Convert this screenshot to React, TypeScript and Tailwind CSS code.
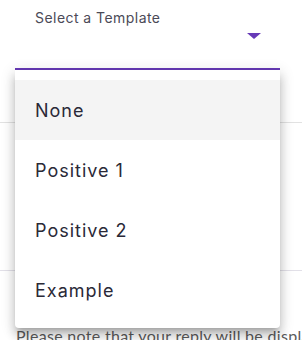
import { useState } from 'react'

const templates = ['None', 'Positive 1', 'Positive 2', 'Example']

export default function App() {
  const [selected, setSelected] = useState('None')

  return (
    <div className="relative w-[302px] h-[340px] overflow-hidden bg-white font-['Inter',sans-serif]">
      {/* select field */}
      <div className="ml-[15px] w-[265px] h-[70px] border-b-2 border-[#673ab7] pl-5 pr-[19px] pt-[8px] flex flex-col">
        <span className="text-[14px] leading-5 tracking-[0.45px] text-[#4b4a57]">Select a Template</span>
        <div className="flex justify-end mt-[5px]">
          <span className="w-0 h-0 border-l-[7px] border-r-[7px] border-t-[6px] border-l-transparent border-r-transparent border-t-[#673ab7]" />
        </div>
      </div>

      {/* page content beneath the open menu */}
      <div className="h-[52px]" />
      <div className="h-px bg-[#e2e2e2]" />
      <div className="h-[147px]" />
      <div className="h-px bg-[#e2e0e8]" />
      <div className="h-[55px]" />
      <p className="px-4 text-[16px] leading-5 tracking-[0.3px] whitespace-nowrap text-[#5b5b5b] font-['Lato',sans-serif]">
        Please note that your reply will be displayed
      </p>

      {/* dropdown menu */}
      <ul className="absolute left-[15px] top-[70px] w-[265px] bg-white rounded-b-[4px] pt-[10px] pb-2 shadow-[0px_5px_5px_-3px_rgba(0,0,0,0.2),0px_8px_10px_1px_rgba(0,0,0,0.14),0px_3px_14px_2px_rgba(0,0,0,0.12)]">
        {templates.map((t) => (
          <li
            key={t}
            onClick={() => setSelected(t)}
            className={
              'h-[60px] px-5 flex items-center text-[18px] tracking-[1px] text-[#2a2937] cursor-pointer ' +
              (selected === t ? 'bg-[#f4f4f4]' : 'bg-white')
            }
          >
            {t}
          </li>
        ))}
      </ul>
    </div>
  )
}
